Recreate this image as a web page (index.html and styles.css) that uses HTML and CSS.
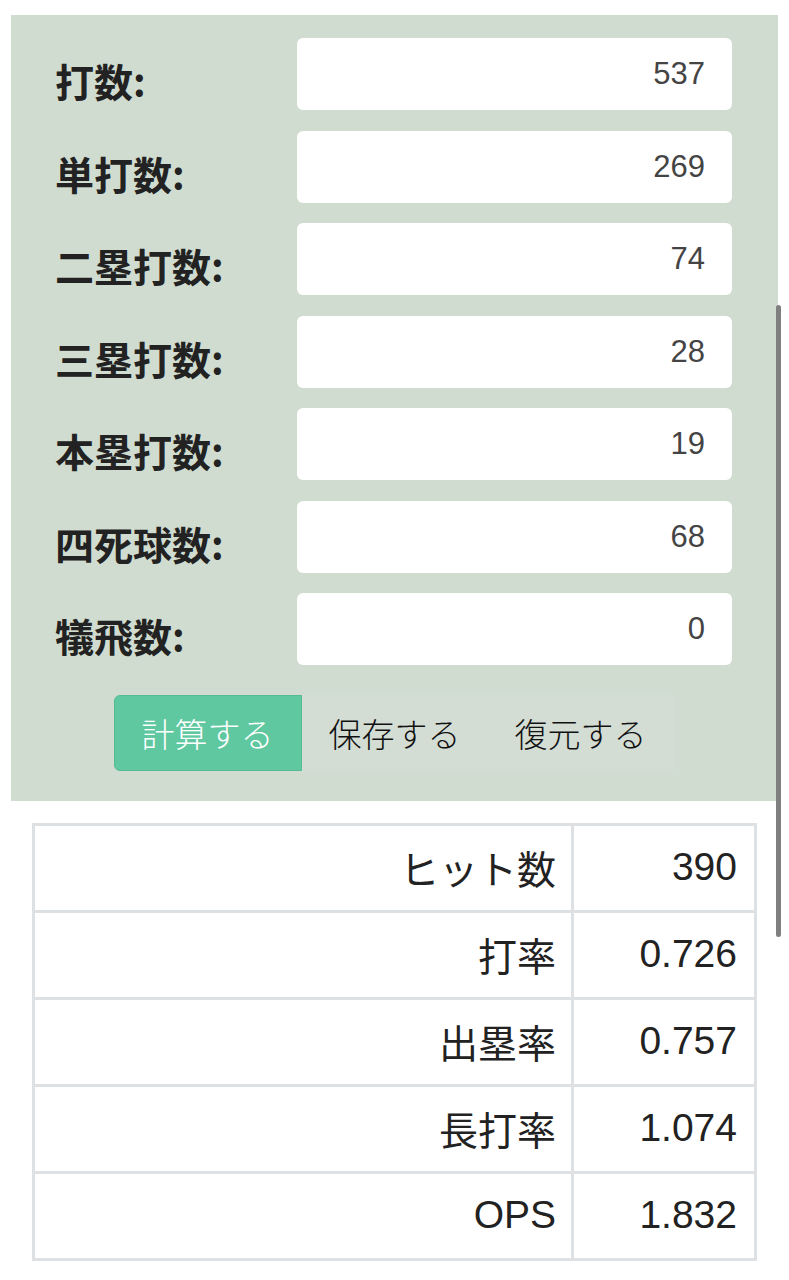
FILE: index.html
```html
<!DOCTYPE html>
<html lang="ja">
<head>
<meta charset="UTF-8">
<meta name="viewport" content="width=device-width, initial-scale=1.0">
<title>OPS計算</title>
<link rel="stylesheet" href="styles.css">
</head>
<body>

<div class="panel">
    <div class="form">
        <label for="ab">打数:</label>
        <input type="text" id="ab" value="537">
        <label for="single">単打数:</label>
        <input type="text" id="single" value="269">
        <label for="double">二塁打数:</label>
        <input type="text" id="double" value="74">
        <label for="triple">三塁打数:</label>
        <input type="text" id="triple" value="28">
        <label for="hr">本塁打数:</label>
        <input type="text" id="hr" value="19">
        <label for="bb">四死球数:</label>
        <input type="text" id="bb" value="68">
        <label for="sf">犠飛数:</label>
        <input type="text" id="sf" value="0">
    </div>

    <div class="btn-group">
        <button class="btn btn-primary">計算する</button>
        <button class="btn">保存する</button>
        <button class="btn">復元する</button>
    </div>
</div>

<table class="result">
    <tr><th>ヒット数</th><td>390</td></tr>
    <tr><th>打率</th><td>0.726</td></tr>
    <tr><th>出塁率</th><td>0.757</td></tr>
    <tr><th>長打率</th><td>1.074</td></tr>
    <tr><th>OPS</th><td>1.832</td></tr>
</table>

<div class="scrollbar"></div>

</body>
</html>
```

FILE: styles.css
```css
body {
    margin: 0;
    padding: 15px 11px 0;
    background-color: #fff;
    font-family: 'Liberation Sans', 'Noto Sans CJK JP', sans-serif;
    color: #212529;
}
.panel {
    background-color: #d0dcd0;
    padding: 23px 46px 30px 44px;
}
.form {
    display: grid;
    grid-template-columns: 242px 1fr;
    row-gap: 20.5px;
    align-items: center;
}
.form label {
    font-family: 'Noto Sans CJK JP', sans-serif;
    font-weight: 700;
    font-size: 39px;
    line-height: 1;
    color: #222;
    padding-top: 13px;
}
.form input {
    height: 72px;
    box-sizing: border-box;
    border: none;
    border-radius: 6px;
    background-color: #fff;
    text-align: right;
    padding: 0 27px 0 10px;
    font-family: 'Liberation Sans', sans-serif;
    font-size: 31px;
    color: #444;
    width: 100%;
}
.btn-group {
    display: flex;
    justify-content: center;
    margin-top: 30px;
}
.btn {
    height: 76px;
    padding: 0 27px;
    border: none;
    background-color: #d4ddd4;
    font-family: 'Noto Sans CJK JP', sans-serif;
    font-size: 33px;
    font-weight: 300;
    color: #111;
}
.btn-primary {
    background-color: #5fc8a0;
    color: #fff;
    border: 1px solid #55bb93;
    border-radius: 6px 0 0 6px;
}
.result {
    margin: 22px 21px 0;
    width: calc(100% - 42px);
    border-collapse: collapse;
    border: 3px solid #dee1e4;
}
.result th, .result td {
    border: 3px solid #dee1e4;
    height: 79px;
    padding-bottom: 4px;
    text-align: right;
    font-size: 39px;
    font-weight: 400;
    color: #222;
}
.result th {
    font-family: 'Liberation Sans', 'Noto Sans CJK JP', sans-serif;
    padding-right: 15px;
}
.result td {
    width: 162px;
    padding-right: 17px;
}
.scrollbar {
    position: absolute;
    left: 776px;
    top: 305px;
    width: 5px;
    height: 632px;
    border-radius: 3px;
    background-color: #7f7f7f;
}
```
